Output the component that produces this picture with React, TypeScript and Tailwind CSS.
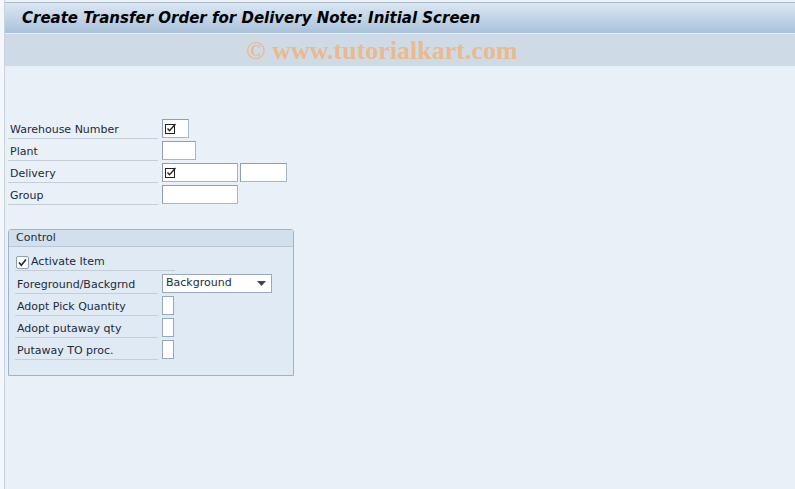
import React from 'react';

const font = { fontFamily: '"DejaVu Sans", Verdana, sans-serif' };

const ReqMark: React.FC = () => (
  <svg width="12" height="12" viewBox="0 0 12 12" className="shrink-0">
    <rect x="0.5" y="1.5" width="9" height="9" fill="none" stroke="#222" strokeWidth="1" />
    <path d="M2.5 5.5 L4.5 7.8 L10.5 1" fill="none" stroke="#222" strokeWidth="1.3" />
  </svg>
);

const Field: React.FC<{ w: string; req?: boolean }> = ({ w, req }) => (
  <div
    className={`${w} h-[19px] bg-white border border-[#a7b6c6] border-t-[#8e9fb2] border-l-[#8e9fb2] flex items-center pl-[2px]`}
  >
    {req && <ReqMark />}
  </div>
);

const Row: React.FC<{ label: string; children?: React.ReactNode; lw?: string }> = ({ label, children, lw = 'w-[150px]' }) => (
  <div className="flex items-start h-[22px]">
    <div className={`${lw} h-[20px] flex items-center pl-[2px] pt-[3px] border-b border-[#c3ceda] text-[11px] text-[#1b2b3c]`}>
      {label}
    </div>
    <div className="flex items-center gap-[2px] ml-[4px]">{children}</div>
  </div>
);

const SmallBox: React.FC = () => <div className="w-[12px] h-[19px] bg-white border border-[#97a8ba]" />;

export default function App() {
  return (
    <div className="w-[795px] h-[489px] bg-[#f4f7fb] pl-[4px] overflow-hidden" style={font}>
      <div className="h-full border-l border-[#c9d4df] bg-[#e9f0f8] flex flex-col">
        <div className="h-[2px] bg-[#edf2f7]" />
        <div className="h-[31px] border-t border-[#a9b9ca] bg-gradient-to-b from-[#dbe7f3] to-[#a9c2db] flex items-center pl-[17px]">
          <span className="text-[15px] font-bold italic text-black">
            Create Transfer Order for Delivery Note: Initial Screen
          </span>
        </div>
        <div className="h-[34px] bg-[#cedbe6] border-t border-[#e4edf5] border-b border-[#a2b3c5] flex items-center justify-center">
          <span
            className="text-[26px] font-bold text-[#ebba8c] ml-[-36px]"
            style={{ fontFamily: '"Liberation Serif", "Times New Roman", serif' }}
          >
            © www.tutorialkart.com
          </span>
        </div>

        <div className="pt-[52px] pl-[3px]">
          <Row label="Warehouse Number">
            <Field w="w-[27px]" req />
          </Row>
          <Row label="Plant">
            <Field w="w-[34px]" />
          </Row>
          <Row label="Delivery">
            <Field w="w-[76px]" req />
            <Field w="w-[47px]" />
          </Row>
          <Row label="Group">
            <Field w="w-[76px]" />
          </Row>
        </div>

        <div className="mt-[22px] ml-[3px] w-[286px] h-[147px] border border-[#9fb3c8] rounded-t-[3px] bg-[#e0eaf5]">
          <div className="h-[17px] bg-[#d2e0ee] border-b border-[#b7c7d8] pl-[7px] pt-[1px] flex items-center text-[11px] text-[#1b2b3c]">
            Control
          </div>
          <div className="pt-[5px] pl-[6px]">
            <div className="flex items-start h-[22px]">
              <div className="w-[160px] h-[19px] flex items-center pt-[3px] border-b border-[#c3ceda] text-[11px] text-[#1b2b3c]">
                <span className="w-[13px] h-[13px] ml-[1px] bg-white border border-[#8e9fb2] rounded-[2px] flex items-center justify-center">
                  <svg width="11" height="11" viewBox="0 0 11 11">
                    <path d="M2 5.5 L4.3 8.2 L9 2.5" fill="none" stroke="#1d2a38" strokeWidth="1.7" />
                  </svg>
                </span>
                <span className="ml-[2px]">Activate Item</span>
              </div>
            </div>
            <Row label="Foreground/Backgrnd" lw="w-[143px]">
              <div className="w-[110px] h-[19px] bg-white border border-[#97a8ba] flex items-center justify-between pl-[3px] pr-[5px] text-[11px] text-[#1b2b3c]">
                <span>Background</span>
                <svg width="9" height="5" viewBox="0 0 9 5">
                  <path d="M0 0 H9 L4.5 5 Z" fill="#34475c" />
                </svg>
              </div>
            </Row>
            <Row label="Adopt Pick Quantity" lw="w-[143px]">
              <SmallBox />
            </Row>
            <Row label="Adopt putaway qty" lw="w-[143px]">
              <SmallBox />
            </Row>
            <Row label="Putaway TO proc." lw="w-[143px]">
              <SmallBox />
            </Row>
          </div>
        </div>
      </div>
    </div>
  );
}
